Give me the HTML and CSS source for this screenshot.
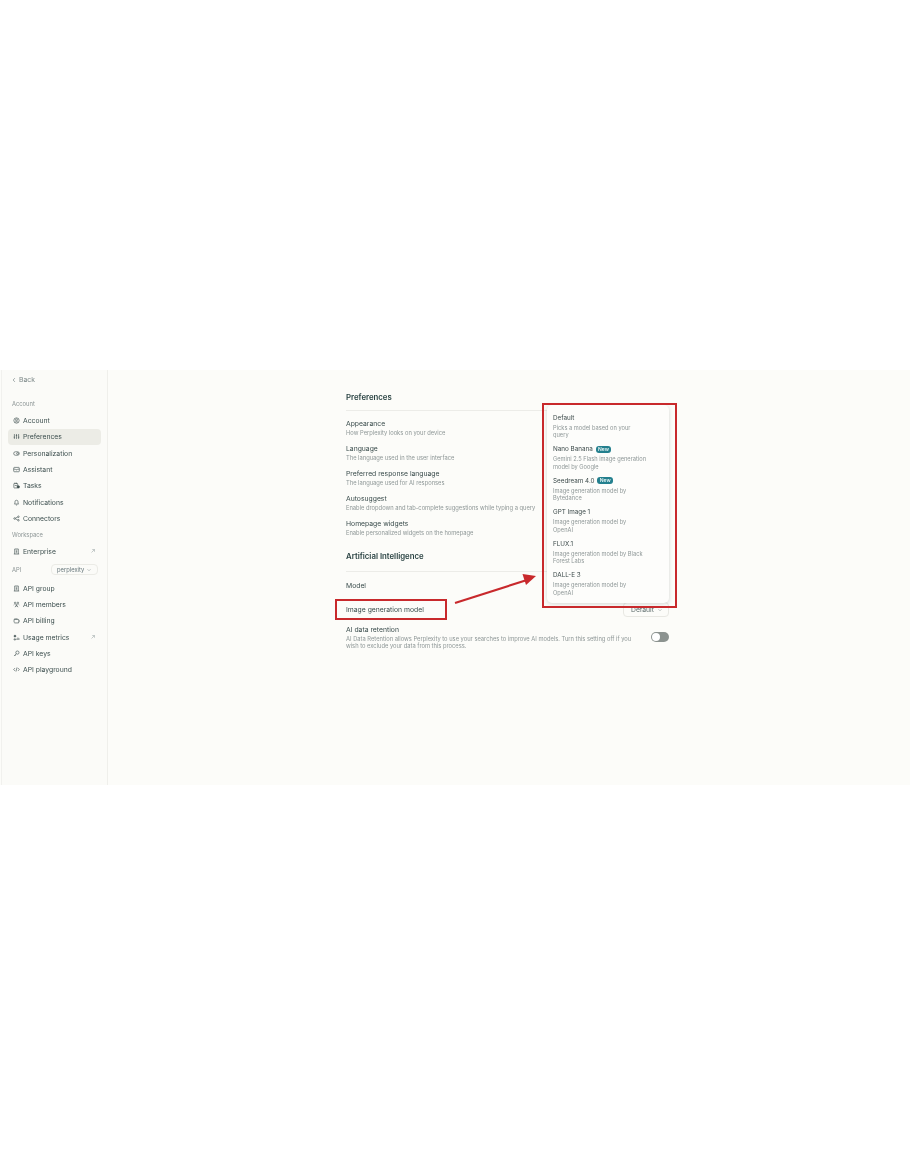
FILE: index.html
```html
<!DOCTYPE html>
<html lang="en">
<head>
<meta charset="utf-8">
<title>Preferences</title>
<link rel="stylesheet" href="styles.css">
</head>
<body>
<div class="app">
  <aside class="sidebar">
    <a class="back"><svg class="chev" viewBox="0 0 8 8"><path d="M5.2 1.5 2.8 4l2.4 2.5"/></svg>Back</a>
    <div class="label first">Account</div>
    <a class="item"><svg class="ico" viewBox="0 0 10 10"><circle cx="5" cy="5" r="3.8"/><circle cx="5" cy="4" r="1.4"/><path d="M2.6 7.8C3.4 6.4 6.6 6.4 7.4 7.8"/></svg>Account</a>
    <a class="item active"><svg class="ico" viewBox="0 0 10 10"><path d="M2 1.5v7M5 1.5v7M8 1.5v7M1 6h2M4 3.5h2M7 6h2"/></svg>Preferences</a>
    <a class="item"><svg class="ico" viewBox="0 0 10 10"><rect x="1" y="2.5" width="8" height="5" rx="2.5"/><circle cx="6.5" cy="5" r="1.3"/></svg>Personalization</a>
    <a class="item"><svg class="ico" viewBox="0 0 10 10"><rect x="1" y="2" width="8" height="6.2" rx="1"/><path d="M1 4.5h2.4l.8 1h1.6l.8-1H9"/></svg>Assistant</a>
    <a class="item"><svg class="ico" viewBox="0 0 10 10"><rect x="1.2" y="2" width="5.5" height="6.5" rx=".8"/><path d="M2.8 1v2M5 1v2M2.500 5h3"/><rect x="6" y="5.500" width="3" height="3" rx=".6" class="solid"/></svg>Tasks</a>
    <a class="item"><svg class="ico" viewBox="0 0 10 10"><path d="M2 7.200h6L7.200 6V4a2.200 2.200 0 0 0-4.400 0v2zM4.200 8.600h1.600"/></svg>Notifications</a>
    <a class="item"><svg class="ico" viewBox="0 0 10 10"><circle cx="2.200" cy="5" r="1.100"/><circle cx="7.800" cy="2.500" r="1.100"/><circle cx="7.800" cy="7.500" r="1.100"/><path d="M3.200 4.500 6.800 3M3.200 5.500l3.600 1.500"/></svg>Connectors</a>
    <div class="label">Workspace</div>
    <a class="item"><svg class="ico" viewBox="0 0 10 10"><path d="M2.400 8.600V1.400h5.200v7.200M1.200 8.600h7.600M4 3.200h2M4 5h2M4 6.800h2"/></svg>Enterprise<svg class="ext" viewBox="0 0 8 8"><path d="M2 6 6 2M3 2h3v3"/></svg></a>
    <div class="api-row"><span class="api-label">API</span><span class="org">perplexity<svg class="down" viewBox="0 0 8 8"><path d="M2 3l2 2 2-2"/></svg></span></div>
    <a class="item"><svg class="ico" viewBox="0 0 10 10"><path d="M2.400 8.600V1.400h5.200v7.200M1.200 8.600h7.600M4 3.200h2M4 5h2M4 6.800h2"/></svg>API group</a>
    <a class="item"><svg class="ico" viewBox="0 0 10 10"><circle cx="3" cy="2.600" r="1"/><circle cx="7" cy="2.600" r="1"/><circle cx="5" cy="5.400" r="1"/><path d="M1 5.600l1.400-1.400M9 5.600 7.600 4.200M3 8.800l1-1.800h2l1 1.800"/></svg>API members</a>
    <a class="item"><svg class="ico" viewBox="0 0 10 10"><path d="M3 1.500v2M5.500 1.500v2M1.500 3.500h6.500v1.500h1v1.500h-1v2H2.500l-1-1z"/></svg>API billing</a>
    <a class="item"><svg class="ico" viewBox="0 0 10 10"><circle cx="2.800" cy="3" r="1.300" class="solid"/><path d="M5.500 8.500V6.500M7 8.500V5M8.500 8.500V6M1.500 8.500h2V7h-2z"/></svg>Usage metrics<svg class="ext" viewBox="0 0 8 8"><path d="M2 6 6 2M3 2h3v3"/></svg></a>
    <a class="item"><svg class="ico" viewBox="0 0 10 10"><circle cx="6.300" cy="3.700" r="2.300"/><path d="M4.600 5.400 1.400 8.600M2.800 7.200l1 1"/></svg>API keys</a>
    <a class="item"><svg class="ico" viewBox="0 0 10 10"><path d="M2.800 3 1 5l1.800 2M7.200 3 9 5 7.200 7M5.800 2 4.200 8"/></svg>API playground</a>
  </aside>

  <main class="main">
    <div class="column">
      <h2 class="heading">Preferences</h2>
      <section class="group">
        <div class="row"><div class="name">Appearance</div><div class="desc">How Perplexity looks on your device</div></div>
        <div class="row"><div class="name">Language</div><div class="desc">The language used in the user interface</div></div>
        <div class="row"><div class="name">Preferred response language</div><div class="desc">The language used for AI responses</div></div>
        <div class="row"><div class="name">Autosuggest</div><div class="desc">Enable dropdown and tab-complete suggestions while typing a query</div></div>
        <div class="row"><div class="name">Homepage widgets</div><div class="desc">Enable personalized widgets on the homepage</div></div>
      </section>
      <h2 class="heading second">Artificial Intelligence</h2>
      <section class="group ai">
        <div class="simple"><span class="name">Model</span></div>
        <div class="simple"><span class="name">Image generation model</span><span class="select">Default<svg class="down" viewBox="0 0 8 8"><path d="M2 3l2 2 2-2"/></svg></span></div>
        <div class="retention">
          <div><div class="name">AI data retention</div><div class="desc wide">AI Data Retention allows Perplexity to use your searches to improve AI models. Turn this setting off if you wish to exclude your data from this process.</div></div>
          <span class="toggle"><span class="knob"></span></span>
        </div>
      </section>
    </div>
  </main>

  <div class="menu">
    <div class="opt"><div class="opt-name">Default</div><div class="opt-desc">Picks a model based on your<br>query</div></div>
    <div class="opt"><div class="opt-name">Nano Banana <span class="badge">New</span></div><div class="opt-desc">Gemini 2.5 Flash image generation<br>model by Google</div></div>
    <div class="opt"><div class="opt-name">Seedream 4.0 <span class="badge">New</span></div><div class="opt-desc">Image generation model by<br>Bytedance</div></div>
    <div class="opt"><div class="opt-name">GPT Image 1</div><div class="opt-desc">Image generation model by<br>OpenAI</div></div>
    <div class="opt"><div class="opt-name">FLUX.1</div><div class="opt-desc">Image generation model by Black<br>Forest Labs</div></div>
    <div class="opt"><div class="opt-name">DALL-E 3</div><div class="opt-desc">Image generation model by<br>OpenAI</div></div>
  </div>
  <div class="mark mark-menu"></div>
  <div class="mark mark-row"></div>
  <svg class="arrow" viewBox="0 0 90 36"><path d="M2 33 74 10" /><path class="head" d="M83 6 69.500 4l3.500 11z"/></svg>
</div>
</body>
</html>
```
FILE: styles.css
```css
* { box-sizing: border-box; }
html, body { margin: 0; height: 100%; background: #fff; }
body { padding-top: 370px; font-family: "Inter", "Liberation Sans", sans-serif; color: #2f4343; overflow: hidden; }
.app { position: relative; display: flex; width: 910px; height: 415px; background: #fcfcf9; filter: blur(.4px); }
.sidebar { width: 107px; margin-left: 1px; padding: 1.500px 6px 0; background: #fbfbf8; border-left: 1px solid #f1f1ee; border-right: 1px solid #efefeb; }
.back, .item { display: flex; align-items: center; height: 16.3px; font-size: 6.8px; color: #3d4f4f; }
.back { padding-left: 3px; gap: 2px; color: #7b8787; }
.chev { width: 6px; height: 6px; }
.chev path, .ext path, .down path, .ico * { fill: none; stroke: currentColor; stroke-width: .9; }
.label { height: 16.3px; line-height: 16.3px; padding-left: 4px; font-size: 5.800px; color: #8b9494; }
.label.first { margin-top: 8.4px; }
.item { padding-left: 5px; padding-right: 5px; border-radius: 4px; }
.item.active { background: #ececE6; }
.ico { width: 7px; height: 7px; margin-right: 3px; flex: none; color: #415252; }
.ico .solid { fill: currentColor; }
.ext { width: 6px; height: 6px; margin-left: auto; color: #a9b1b1; }
.api-row { display: flex; align-items: center; justify-content: space-between; height: 21px; padding-left: 4px; padding-right: 3px; }
.api-label { font-size: 5.800px; color: #8b9494; }
.org { display: inline-flex; align-items: center; gap: 2px; height: 11px; width: 47px; padding-left: 5px; border: 1px solid #ebebe6; border-radius: 4px; font-size: 5.800px; color: #66767a; }
.down { width: 6px; height: 6px; color: #a0a9a9; }
.main { flex: 1; padding: 21px 0 0 238px; }
.column { width: 323px; }
.heading { margin: 0; height: 20px; padding-bottom: 7px; font-size: 7.800px; line-height: 13px; font-weight: 600; color: #2b4444; border-bottom: 1px solid #ececE8; }
.heading.second { margin-top: 6.500px; height: 22px; padding-bottom: 9px; }
.group { padding-top: 7.500px; }
.row { height: 25px; }
.name { font-size: 6.800px; line-height: 9px; color: #3a4c4c; }
.desc { font-size: 5.780px; line-height: 7px; margin-top: 1.500px; color: #8e9797; }
.group.ai { padding-top: 1px; }
.simple { display: flex; align-items: center; justify-content: space-between; height: 24px; }
.select { display: inline-flex; align-items: center; gap: 3px; height: 15px; width: 46px; padding-left: 7px; margin-top: 1px; border: 1px solid #e8e8e3; border-radius: 4px; font-size: 6.800px; color: #5c6b6b; }
.retention { display: flex; justify-content: space-between; align-items: center; padding-top: 3.500px; }
.desc.wide { width: 290px; margin-top: 1px; }
.toggle { display: block; width: 18px; height: 10px; padding: 1px; border-radius: 5px; background: #8c9390; }
.knob { display: block; width: 8px; height: 8px; border-radius: 50%; background: #fff; }
.menu { position: absolute; left: 547px; top: 35px; width: 122px; height: 198px; padding: 8.500px 6px 0; background: #fdfdfb; border-radius: 5px; box-shadow: 0 1px 4px rgba(40, 50, 50, .18); }
.opt { height: 31.500px; }
.opt-name { font-size: 6.300px; line-height: 9px; color: #3c4a4a; white-space: nowrap; }
.opt-desc { font-size: 5.700px; line-height: 7.600px; margin-top: 1px; color: #8e9797; white-space: nowrap; }
.badge { display: inline-block; padding: 0 2.500px; border-radius: 3px; background: #24808e; color: #e8f5f5; font-size: 5px; line-height: 7px; font-weight: 600; vertical-align: .5px; margin-left: 1px; }
.mark { position: absolute; border: 2.500px solid #c8292c; }
.mark-menu { left: 542px; top: 33px; width: 135px; height: 205px; }
.mark-row { left: 335px; top: 229px; width: 112px; height: 21px; }
.arrow { position: absolute; left: 453px; top: 200px; width: 90px; height: 36px; }
.arrow path { fill: none; stroke: #c8292c; stroke-width: 2.200; }
.arrow .head { fill: #c8292c; stroke: none; }
```
